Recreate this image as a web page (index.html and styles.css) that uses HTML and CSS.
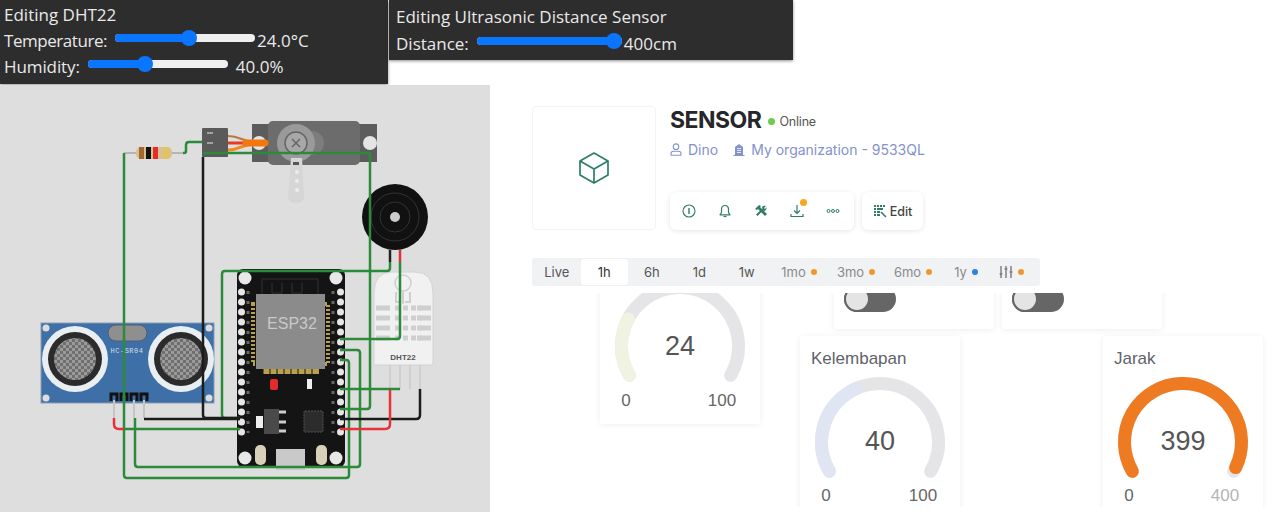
FILE: index.html
```html
<!DOCTYPE html>
<html>
  <head>
    <meta charset="utf-8">
    <title>Sensor</title>
    <link rel="stylesheet" href="styles.css">
  </head>
  <body>
    <div class="top-row">
      <div class="editor editor-dht">
        <div class="editor-title">Editing DHT22</div>
        <div class="editor-row">
          <span class="label-tight">Temperature:</span>
          <div class="slider"><div class="slider-fill" style="width: 74px"></div><div class="slider-thumb"></div></div>
          <span class="slider-value">24.0°C</span>
        </div>
        <div class="editor-row">
          <span class="label-snug">Humidity:</span>
          <div class="slider"><div class="slider-fill" style="width: 57px"></div><div class="slider-thumb"></div></div>
          <span class="slider-value slider-value-wide">40.0%</span>
        </div>
      </div>
      <div class="editor editor-sonic">
        <div class="editor-title">Editing Ultrasonic Distance Sensor</div>
        <div class="editor-row">
          <span>Distance:</span>
          <div class="slider slider-long"><div class="slider-fill" style="width: 138px"></div><div class="slider-thumb"></div></div>
          <span class="slider-value">400cm</span>
        </div>
      </div>
    </div>

    <div class="main-row">
      <div class="sim">
        <svg class="sim-svg" width="490" height="427" viewBox="0 85 490 427">
          <defs>
            <pattern id="mesh" width="6" height="6" patternUnits="userSpaceOnUse">
              <rect width="6" height="6" fill="#6f6f6f"/>
              <rect width="3" height="3" fill="#9a9a9a"/>
              <rect x="3" y="3" width="3" height="3" fill="#9a9a9a"/>
            </pattern>
          </defs>

          <!-- servo -->
          <rect x="252" y="124" width="125" height="38" fill="#5c5c5c"/>
          <rect x="268" y="121" width="92" height="44" rx="5" fill="#6c6c6c"/>
          <circle cx="370" cy="143" r="7" fill="#e4e4e4"/>
          <circle cx="259" cy="143" r="7" fill="#e4e4e4"/>
          <circle cx="312" cy="143" r="12" fill="#7d7d7d"/>
          <circle cx="296" cy="143" r="19" fill="#9a9a9a"/>
          <path d="M291 158h11l2 40q-1 5-8 5t-8-5z" fill="#d6d6d6"/>
          <rect x="293" y="162" width="6" height="3" fill="#555"/>
          <circle cx="297" cy="172" r="2" fill="#ececec"/>
          <circle cx="297" cy="181" r="2" fill="#ececec"/>
          <circle cx="297" cy="190" r="2" fill="#ececec"/>
          <circle cx="296" cy="143" r="11" fill="#a8a8a8" stroke="#666" stroke-width="1.5"/>
          <path d="M292 139l8 8M300 139l-8 8" stroke="#666" stroke-width="1.5"/>
          <path d="M228 136c14 0 14 7 34 7" fill="none" stroke="#b5793a" stroke-width="2"/>
          <path d="M228 143h36" stroke="#e53b22" stroke-width="3"/>
          <path d="M228 150c14 0 14-7 34-7" fill="none" stroke="#f08a1d" stroke-width="3"/>
          <path d="M246 143h19" stroke="#f4760f" stroke-width="7" stroke-linecap="round"/>
          <rect x="202" y="128" width="26" height="29" rx="1" fill="#5a5a5a"/>
          <path d="M207 133h6M207 143h6" stroke="#bbb" stroke-width="1.5"/>

          <!-- resistor -->
          <path d="M124 153h60" stroke="#b5b5b5" stroke-width="2"/>
          <rect x="136" y="147" width="36" height="12" rx="5" fill="#d9c08f"/>
          <rect x="139" y="147" width="5" height="12" fill="#a4672f"/>
          <rect x="146" y="147" width="5" height="12" fill="#111"/>
          <rect x="153" y="147" width="5" height="12" fill="#e62b2b"/>
          <rect x="164" y="147" width="5" height="12" fill="#e3c35d"/>

          <!-- buzzer -->
          <circle cx="395" cy="217" r="33" fill="#111"/>
          <circle cx="395" cy="217" r="24" fill="none" stroke="#333" stroke-width="1"/>
          <circle cx="395" cy="217" r="15" fill="none" stroke="#333" stroke-width="1"/>
          <circle cx="395" cy="217" r="5" fill="#ccc"/>
          <path d="M390 250v12" stroke="#222" stroke-width="2.5"/>
          <path d="M400 250v12" stroke="#d9342b" stroke-width="2.5"/>

          <!-- ultrasonic sensor -->
          <rect x="41" y="323" width="173" height="80" fill="#3e6fa6" stroke="#8a9db3"/>
          <circle cx="46" cy="328" r="3.5" fill="#ddd"/>
          <circle cx="209" cy="328" r="3.5" fill="#ddd"/>
          <circle cx="46" cy="398" r="3.5" fill="#ddd"/>
          <circle cx="209" cy="398" r="3.5" fill="#ddd"/>
          <circle cx="75" cy="359" r="33" fill="#e8eef2"/>
          <circle cx="75" cy="359" r="27" fill="#2b2b2b"/>
          <circle cx="75" cy="359" r="21" fill="url(#mesh)"/>
          <circle cx="181" cy="359" r="33" fill="#e8eef2"/>
          <circle cx="181" cy="359" r="27" fill="#2b2b2b"/>
          <circle cx="181" cy="359" r="21" fill="url(#mesh)"/>
          <rect x="108" y="325" width="39" height="16" rx="8" fill="#8f8f8f" stroke="#4f5f74"/>
          <text class="sim-tiny" x="127" y="353" text-anchor="middle">HC-SR04</text>
          <path d="M111 401v-7h6v7M121 401v-7h6v7M131 401v-7h6v7M141 401v-7h6v7" fill="none" stroke="#111" stroke-width="3"/>
          <path d="M114 400v18M124 400v18M134 400v18M144 400v18" stroke="#c4c4c4" stroke-width="2"/>

          <!-- dht22 -->
          <path d="M374 293q0-21 18-21h23q18 0 18 21v72h-59z" fill="#f1f1f1" stroke="#d2d2d2"/>
          <circle cx="403" cy="283" r="8" fill="none" stroke="#cfcfcf" stroke-width="1.5"/>
          <path d="M396 292v10h5M410 292v10h-5M403 292v12" fill="none" stroke="#cfcfcf" stroke-width="2"/>
          <path d="M376 308h14M376 318h14M376 328h14M376 338h14M417 308h14M417 318h14M417 328h14M417 338h14" stroke="#cfcfcf" stroke-width="5"/>
          <path d="M395 308h27M395 318h27M395 328h27M395 338h27" stroke="#cfcfcf" stroke-width="5" stroke-dasharray="5 3"/>
          <text class="sim-dht" x="403" y="360" text-anchor="middle">DHT22</text>
          <path d="M390 365v24M400 365v24M410 365v24M420 365v24" stroke="#cfcfcf" stroke-width="2"/>

          <!-- esp32 -->
          <rect x="237" y="269" width="108" height="198" rx="6" fill="#141414"/>
          <path d="M262 295v-16h56v16M272 283v10h10v-10M292 283v10h10v-10" fill="none" stroke="#333"/>
          <rect x="253" y="304" width="75" height="60" fill="none" stroke="#b8a04c" stroke-width="4" stroke-dasharray="2 2"/>
          <rect x="263" y="369" width="56" height="5" fill="#b8a04c"/>
          <path d="M263 369v5M270 369v5M277 369v5M284 369v5M291 369v5M298 369v5M305 369v5M312 369v5" stroke="#141414"/>
          <rect x="256" y="294" width="69" height="75" fill="#8b8b8b"/>
          <text class="sim-chip" x="292" y="329" text-anchor="middle">ESP32</text>
          <circle cx="245" cy="278" r="6.5" fill="#e8e8e8"/>
          <circle cx="336" cy="278" r="6.5" fill="#e8e8e8"/>
          <circle cx="245" cy="458" r="6.5" fill="#e8e8e8"/>
          <circle cx="336" cy="458" r="6.5" fill="#e8e8e8"/>
          <path d="M241.500 292v141M340.500 292v141" stroke="#e6e6e6" stroke-width="7" stroke-linecap="round" stroke-dasharray="0 10"/>
          <path d="M248 291v142M333 291v142" stroke="#666" stroke-width="3" stroke-dasharray="3 7"/>
          <rect x="270" y="379" width="8" height="11" rx="2" fill="#e22b2b"/>
          <rect x="307" y="379" width="5" height="10" fill="#eee"/>
          <rect x="256" y="416" width="7" height="12" fill="#eee"/>
          <rect x="264" y="409" width="15" height="25" fill="#4a4a4a"/>
          <path d="M279 412h7M279 422h7M279 431h7" stroke="#ccc" stroke-width="3"/>
          <rect x="304" y="411" width="19" height="21" rx="1" fill="#2c2c2c" stroke="#555" stroke-dasharray="2 1"/>
          <rect x="276" y="449" width="29" height="21" fill="#c9c9c9"/>
          <rect x="255" y="445" width="11" height="20" rx="5" fill="#d8d0b8"/>
          <rect x="316" y="445" width="11" height="20" rx="5" fill="#d8d0b8"/>

          <!-- wires -->
          <g class="wire-green">
            <path d="M183 153h1q2 0 2-2v-6q0-3 3-3h13"/>
            <path d="M124 153v322q0 3 3 3h219q3 0 3-3V363q0-3-3-3h-6"/>
            <path d="M135 418v46q0 3 3 3h219q3 0 3-3V353q0-3-3-3h-17"/>
            <path d="M203 153h167v253q0 3-3 3h-27"/>
            <path d="M240 418h-15q-3 0-3-3V274q0-3 3-3h162q3 0 3-3v-6"/>
            <path d="M400 262v74q0 3-3 3h-57"/>
            <path d="M124 429h116"/>
            <path d="M340 389h60"/>
          </g>
          <g class="wire-black">
            <path d="M203 157v258q0 3 3 3h34"/>
            <path d="M144 419h96"/>
            <path d="M420 389v26q0 4-4 4h-76"/>
          </g>
          <g class="wire-red">
            <path d="M114 418v6q0 5 5 5h5"/>
            <path d="M390 390v34q0 5-5 5h-45"/>
          </g>
        </svg>
      </div>

      <div class="dash">
        <div class="device">
          <div class="device-thumb">
            <svg width="34" height="34" viewBox="0 0 34 34" fill="none" stroke="#2f7d66" stroke-width="1.700" stroke-linejoin="round">
              <path d="M17 2l14 8v14l-14 8-14-8V10z"/>
              <path d="M3 10l14 8 14-8M17 18v14"/>
            </svg>
          </div>
          <div class="device-info">
            <div class="device-title">
              <span class="device-name">SENSOR</span>
              <span class="status-dot"></span>
              <span class="status-text">Online</span>
            </div>
            <div class="device-meta">
              <svg width="12" height="13" viewBox="0 0 12 13" fill="none" stroke="#8492cc" stroke-width="1.100">
                <circle cx="6" cy="3.700" r="2.800"/>
                <path d="M1 12.300v-1.500q0-2.500 2.500-2.500h5q2.500 0 2.500 2.500v1.500z"/>
              </svg>
              <span class="meta-owner">Dino</span>
              <svg width="12" height="13" viewBox="0 0 12 13" fill="#8492cc">
                <path d="M2 4l4-3 4 3v8H2zM0.500 12h11v1h-11z"/>
                <path d="M4 5.500h4M4 7.500h4M4 9.500h4" stroke="#fff" stroke-width="0.800"/>
              </svg>
              <span>My organization - 9533QL</span>
            </div>
            <div class="device-actions">
              <div class="toolbar">
                <div class="tool">
                  <svg width="14" height="14" viewBox="0 0 14 14" fill="none" stroke="#2f7d66" stroke-width="1.100">
                    <circle cx="7" cy="7" r="6"/>
                    <path d="M7 4v6" stroke-width="1.400"/>
                  </svg>
                </div>
                <div class="tool">
                  <svg width="14" height="14" viewBox="0 0 14 14" fill="none" stroke="#2f7d66" stroke-width="1.200" stroke-linejoin="round">
                    <path d="M7 1.500q-3.500 0-3.500 4v3L2 10.800h10L10.500 8.500v-3q0-4-3.500-4z"/>
                    <path d="M5.500 12.500h3"/>
                  </svg>
                </div>
                <div class="tool">
                  <svg width="14" height="14" viewBox="0 0 14 14" fill="#2f7d66">
                    <path d="M1 5L5 1l2 1-1 1 7 7-2 2-7-7-1 1z"/>
                    <path d="M13 3l-2 2-1-1 2-2q-3-1-4 1l.5 1.500L2 10.500 3.500 12 9 6.500l1.500.5q2-1 2.500-4z"/>
                  </svg>
                </div>
                <div class="tool">
                  <svg width="14" height="14" viewBox="0 0 14 14" fill="none" stroke="#2f7d66" stroke-width="1.200">
                    <path d="M7 1v8M4 6.500L7 9.500l3-3M1 10v2.500h12V10"/>
                  </svg>
                  <span class="tool-dot"></span>
                </div>
                <div class="tool">
                  <svg width="14" height="6" viewBox="0 0 14 6" fill="none" stroke="#2f7d66" stroke-width="1">
                    <circle cx="2.500" cy="3" r="1.500"/>
                    <circle cx="7" cy="3" r="1.500"/>
                    <circle cx="11.500" cy="3" r="1.500"/>
                  </svg>
                </div>
              </div>
              <div class="edit-btn">
                <svg width="14" height="14" viewBox="0 0 14 14" fill="#2f7d66">
                  <path d="M1 1h2v2H1zM4 1h2v2H4zM7 1h2v2H7zM10 1h2v2h-2zM1 4h2v2H1zM1 7h2v2H1zM1 10h2v2H1zM4 4h6v2H4zM4 7h3v2H4zM4 10h3v2H4z"/>
                  <path d="M8 8l5 5" stroke="#2f7d66" stroke-width="1.600"/>
                </svg>
                <span>Edit</span>
              </div>
            </div>
          </div>
        </div>

        <div class="ranges">
          <div class="range">Live</div>
          <div class="range range-active">1h</div>
          <div class="range">6h</div>
          <div class="range">1d</div>
          <div class="range">1w</div>
          <div class="range range-wide">1mo<span class="dot dot-orange"></span></div>
          <div class="range range-wide">3mo<span class="dot dot-orange"></span></div>
          <div class="range range-wide">6mo<span class="dot dot-orange"></span></div>
          <div class="range range-wide range-year">1y<span class="dot dot-blue"></span></div>
          <div class="range range-wide range-filter">
            <svg width="14" height="14" viewBox="0 0 14 14" stroke="#666" stroke-width="1.200" fill="none">
              <path d="M2 1v12M7 1v12M12 1v12M0.500 9h3M5.500 4h3M10.500 7h3"/>
            </svg>
            <span class="dot dot-orange"></span>
          </div>
        </div>

        <div class="widgets">
          <div class="widgets-inner">
            <div class="card">
              <div class="card-title"></div>
              <svg class="gauge" width="160" height="138" viewBox="0 0 160 138">
                <path class="gauge-track" d="M29.340 89.250A58.500 58.500 0 1 1 130.660 89.250"/>
                <path class="gauge-value gauge-temp" d="M29.340 89.250A58.500 58.500 0 0 1 28.160 32.900"/>
                <text class="gauge-num" x="80" y="69" text-anchor="middle">24</text>
                <text class="gauge-tick" x="26" y="120" text-anchor="middle">0</text>
                <text class="gauge-tick" x="122" y="120" text-anchor="middle">100</text>
              </svg>
            </div>
            <div class="right-col">
              <div class="toggle-row">
                <div class="card card-toggle"><div class="toggle"><div class="toggle-knob"></div></div></div>
                <div class="card card-toggle"><div class="toggle"><div class="toggle-knob"></div></div></div>
              </div>
              <div class="gauge-row">
                <div class="card">
                  <div class="card-title">Kelembapan</div>
                  <svg class="gauge" width="160" height="138" viewBox="0 0 160 138">
                    <path class="gauge-track" d="M29.340 89.250A58.500 58.500 0 1 1 130.660 89.250"/>
                    <path class="gauge-value gauge-hum" d="M29.340 89.250A58.500 58.500 0 0 1 56.200 6.560"/>
                    <text class="gauge-num" x="80" y="68" text-anchor="middle">40</text>
                    <text class="gauge-tick" x="26" y="119" text-anchor="middle">0</text>
                    <text class="gauge-tick" x="123" y="119" text-anchor="middle">100</text>
                  </svg>
                </div>
                <div class="card">
                  <div class="card-title">Jarak</div>
                  <svg class="gauge" width="160" height="138" viewBox="0 0 160 138">
                    <path class="gauge-track" d="M29.340 89.250A58.500 58.500 0 1 1 130.660 89.250"/>
                    <path class="gauge-value gauge-dist" d="M29.340 89.250A58.500 58.500 0 1 1 132.600 85.600"/>
                    <text class="gauge-num" x="80" y="68" text-anchor="middle">399</text>
                    <text class="gauge-tick" x="26" y="119" text-anchor="middle">0</text>
                    <text class="gauge-tick gauge-tick-faded" x="122" y="119" text-anchor="middle">400</text>
                  </svg>
                </div>
              </div>
            </div>
          </div>
        </div>
      </div>
    </div>
  </body>
</html>
```
FILE: styles.css
```css
html, body {
  background-color: #fff;
  margin: 0;
  padding: 0;
  overflow: hidden;
  height: 100%;
}
body {
  font-family: "Inter", "Liberation Sans", sans-serif;
}

.top-row {
  display: flex;
  height: 85px;
  align-items: flex-start;
}
.editor {
  background: #2d2d2d;
  color: #e9e9e9;
  font-family: "Open Sans", "Noto Sans", sans-serif;
  font-size: 17px;
  box-sizing: border-box;
  padding: 1px 0 0 4px;
  box-shadow: 0 1px 3px rgba(0, 0, 0, 0.45);
}
.editor-dht {
  width: 388px;
  height: 84px;
}
.editor-sonic {
  width: 404px;
  height: 60px;
  margin-left: 1px;
  padding-left: 7px;
  padding-top: 3px;
}
.editor-title {
  height: 26px;
  line-height: 27px;
}
.editor-sonic .editor-title {
  height: 27px;
}
.editor-row {
  display: flex;
  align-items: center;
  height: 26px;
  gap: 8px;
}
.label-tight {
  letter-spacing: -0.45px;
}
.label-snug {
  letter-spacing: -0.1px;
}
.slider {
  width: 140px;
  height: 8px;
  margin-top: -4px;
  border-radius: 4px;
  background: #efefef;
  display: flex;
  align-items: center;
}
.slider-long {
  width: 145px;
}
.slider-fill {
  height: 8px;
  border-radius: 4px 0 0 4px;
  background: #0a75ff;
}
.slider-thumb {
  width: 16px;
  height: 16px;
  margin-left: -8px;
  border-radius: 50%;
  background: #0a75ff;
  flex: none;
}
.slider-value {
  margin-left: -6px;
}
.slider-value-wide {
  margin-left: 0;
}

.main-row {
  display: flex;
  height: 427px;
}
.sim {
  width: 490px;
  flex: none;
  background: #dedede;
}
.sim-svg {
  display: block;
}
.sim-tiny {
  font: 7px "Liberation Mono", monospace;
  fill: #d5dfe9;
  letter-spacing: 0.5px;
}
.sim-dht {
  font: bold 8px "Liberation Sans", sans-serif;
  fill: #555;
}
.sim-chip {
  font: 16px "Liberation Sans", sans-serif;
  fill: #c9c9c9;
}
.wire-green path, .wire-black path, .wire-red path {
  fill: none;
  stroke-width: 2.5;
  stroke-linejoin: round;
}
.wire-green path {
  stroke: #2c8a3b;
}
.wire-black path {
  stroke: #1c1c1c;
}
.wire-red path {
  stroke: #e8313a;
}

.dash {
  flex: 1;
  padding: 21px 0 0 42px;
}
.device {
  display: flex;
  height: 124px;
}
.device-thumb {
  width: 124px;
  height: 124px;
  box-sizing: border-box;
  border: 1px solid #f4f4f4;
  border-radius: 4px;
  display: flex;
  align-items: center;
  justify-content: center;
}
.device-info {
  margin-left: 14px;
  display: flex;
  flex-direction: column;
}
.device-title {
  display: flex;
  align-items: center;
  height: 28px;
}
.device-name {
  font-size: 23px;
  font-weight: 700;
  color: #26262b;
  letter-spacing: -0.5px;
}
.status-dot {
  width: 7px;
  height: 7px;
  border-radius: 50%;
  background: #6ecb4e;
  margin: 2px 4px 0 7px;
}
.status-text {
  font-size: 12.500px;
  color: #555;
  margin-top: 2px;
  letter-spacing: -0.2px;
}
.device-meta {
  display: flex;
  align-items: center;
  margin-top: 7px;
  gap: 6px;
  font-size: 14px;
  color: #8492cc;
}
.meta-owner {
  margin-right: 9px;
}
.device-actions {
  display: flex;
  gap: 8px;
  margin-top: auto;
}
.toolbar, .edit-btn {
  height: 38px;
  border-radius: 6px;
  background: #fff;
  box-shadow: 0 1px 5px rgba(0, 0, 0, 0.1);
  display: flex;
  align-items: center;
}
.toolbar {
  padding: 0 3px 0 1px;
}
.tool {
  position: relative;
  width: 36px;
  display: flex;
  align-items: center;
  justify-content: center;
}
.tool-dot {
  position: absolute;
  top: -5px;
  right: 8px;
  width: 7px;
  height: 7px;
  border-radius: 50%;
  background: #f5a623;
}
.edit-btn {
  width: 61px;
  justify-content: center;
  gap: 3px;
  font-size: 12.500px;
  font-weight: 500;
  color: #444;
}

.ranges {
  display: flex;
  align-items: center;
  width: 508px;
  height: 28px;
  margin-top: 28px;
  padding: 0 1px;
  box-sizing: border-box;
  background: #f1f2f4;
  border-radius: 3px;
  font-size: 13px;
  color: #555;
}
.range {
  width: 47.500px;
  height: 26px;
  display: flex;
  align-items: center;
  justify-content: center;
  border-radius: 3px;
}
.range-active {
  background: #fff;
  color: #333;
}
.range-wide {
  width: 57px;
  gap: 5px;
  color: #8a8a8a;
}
.range-year {
  width: 49px;
}
.range-filter {
  width: 42px;
}
.dot {
  width: 6px;
  height: 6px;
  border-radius: 50%;
}
.dot-orange {
  background: #ef962f;
}
.dot-blue {
  background: #2b83e0;
}

.widgets {
  height: 214px;
  margin-top: 7px;
  overflow: hidden;
}
.widgets-inner {
  display: flex;
  align-items: flex-start;
  margin: -53px 0 0 68px;
}
.card {
  width: 160px;
  background: #fff;
  border-radius: 3px;
  box-shadow: 0 1px 6px rgba(0, 0, 0, 0.07);
  flex: none;
}
.card-title {
  height: 46px;
  box-sizing: border-box;
  padding: 13px 0 0 11px;
  font-family: "Liberation Sans", sans-serif;
  font-size: 17px;
  color: #5f6368;
}
.gauge {
  display: block;
  overflow: visible;
}
.gauge-track, .gauge-value {
  fill: none;
  stroke-width: 13;
  stroke-linecap: round;
}
.gauge-track {
  stroke: #e5e5e7;
}
.gauge-temp {
  stroke: #f1f3e2;
}
.gauge-hum {
  stroke: #dfe5f2;
}
.gauge-dist {
  stroke: #ee7a22;
}
.gauge-num {
  font: 27px "Liberation Sans", sans-serif;
  fill: #555;
}
.gauge-tick {
  font: 17px "Liberation Sans", sans-serif;
  fill: #666;
}
.gauge-tick-faded {
  fill: #b5b5b5;
}
.right-col {
  margin-left: 40px;
}
.toggle-row {
  display: flex;
  gap: 8px;
  padding-left: 34px;
}
.card-toggle {
  height: 89px;
  box-sizing: border-box;
  padding: 46px 0 0 10px;
}
.toggle {
  width: 52px;
  height: 26px;
  border-radius: 13px;
  background: #666;
}
.toggle-knob {
  width: 22px;
  height: 22px;
  margin: 0;
  border: 2px solid #666;
  border-radius: 50%;
  background: #e4e4e4;
}
.gauge-row {
  display: flex;
  align-items: flex-start;
  gap: 143px;
  margin-top: 7px;
}
```
